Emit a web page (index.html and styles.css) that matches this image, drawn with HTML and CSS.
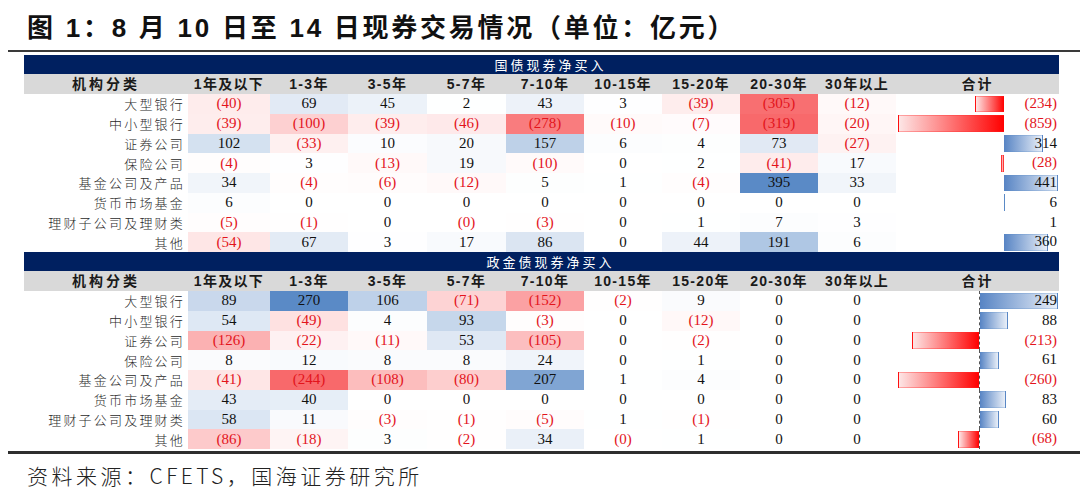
FILE: index.html
```html
<!DOCTYPE html>
<html lang="zh-CN">
<head>
<meta charset="utf-8">
<title>图1 现券交易情况</title>
<link rel="stylesheet" href="styles.css">
</head>
<body>
<div class="page">
  <h1 class="title">图 1：8 月 10 日至 14 日现券交易情况（单位：亿元）</h1>
  <div class="rule top"></div>
  <table class="grid">
    <colgroup>
      <col class="c-lb"><col class="c-1"><col class="c-2"><col class="c-3"><col class="c-3"><col class="c-4"><col class="c-4"><col class="c-4"><col class="c-4"><col class="c-4"><col class="c-tot">
    </colgroup>
    <tbody class="t1">
      <tr class="band"><th colspan="11">国债现券净买入</th></tr>
      <tr class="head"><th class="hl">机构分类</th><th>1年及以下</th><th>1-3年</th><th>3-5年</th><th>5-7年</th><th>7-10年</th><th>10-15年</th><th>15-20年</th><th>20-30年</th><th>30年以上</th><th class="ht">合计</th></tr>
      <tr class="row"><td class="lb">大型银行</td><td class="n" style="--t:.125">(40)</td><td class="p" style="--t:.175">69</td><td class="p" style="--t:.114">45</td><td class="p" style="--t:.005">2</td><td class="p" style="--t:.109">43</td><td class="p" style="--t:.008">3</td><td class="n" style="--t:.122">(39)</td><td class="n" style="--t:.956">(305)</td><td class="n" style="--t:.038">(12)</td><td class="tot"><div class="tin"><div class="bars"><span class="neg"><span class="bar" style="width:28.9px"></span></span><span class="pos"></span></div><span class="num neg-num">(234)</span></div></td></tr>
      <tr class="row"><td class="lb">中小型银行</td><td class="n" style="--t:.122">(39)</td><td class="n" style="--t:.313">(100)</td><td class="n" style="--t:.122">(39)</td><td class="n" style="--t:.144">(46)</td><td class="n" style="--t:.871">(278)</td><td class="n" style="--t:.031">(10)</td><td class="n" style="--t:.022">(7)</td><td class="n" style="--t:1">(319)</td><td class="n" style="--t:.063">(20)</td><td class="tot"><div class="tin"><div class="bars"><span class="neg"><span class="bar" style="width:106px"></span></span><span class="pos"></span></div><span class="num neg-num">(859)</span></div></td></tr>
      <tr class="row"><td class="lb">证券公司</td><td class="p" style="--t:.258">102</td><td class="n" style="--t:.103">(33)</td><td class="p" style="--t:.025">10</td><td class="p" style="--t:.051">20</td><td class="p" style="--t:.397">157</td><td class="p" style="--t:.015">6</td><td class="p" style="--t:.01">4</td><td class="p" style="--t:.185">73</td><td class="n" style="--t:.085">(27)</td><td class="tot"><div class="tin"><div class="bars"><span class="neg"></span><span class="pos"><span class="bar" style="width:38.7px"></span></span></div><span class="num">314</span></div></td></tr>
      <tr class="row"><td class="lb">保险公司</td><td class="n" style="--t:.013">(4)</td><td class="p" style="--t:.008">3</td><td class="n" style="--t:.041">(13)</td><td class="p" style="--t:.048">19</td><td class="n" style="--t:.031">(10)</td><td class="z">0</td><td class="p" style="--t:.005">2</td><td class="n" style="--t:.129">(41)</td><td class="p" style="--t:.043">17</td><td class="tot"><div class="tin"><div class="bars"><span class="neg"><span class="bar" style="width:3.5px"></span></span><span class="pos"></span></div><span class="num neg-num">(28)</span></div></td></tr>
      <tr class="row"><td class="lb">基金公司及产品</td><td class="p" style="--t:.086">34</td><td class="n" style="--t:.013">(4)</td><td class="n" style="--t:.019">(6)</td><td class="n" style="--t:.038">(12)</td><td class="p" style="--t:.013">5</td><td class="p" style="--t:.003">1</td><td class="n" style="--t:.013">(4)</td><td class="p" style="--t:1">395</td><td class="p" style="--t:.084">33</td><td class="tot"><div class="tin"><div class="bars"><span class="neg"></span><span class="pos"><span class="bar" style="width:54.4px"></span></span></div><span class="num">441</span></div></td></tr>
      <tr class="row"><td class="lb">货币市场基金</td><td class="p" style="--t:.015">6</td><td class="z">0</td><td class="z">0</td><td class="z">0</td><td class="z">0</td><td class="z">0</td><td class="z">0</td><td class="z">0</td><td class="z">0</td><td class="tot"><div class="tin"><div class="bars"><span class="neg"></span><span class="pos"><span class="bar thin" style="width:1px"></span></span></div><span class="num">6</span></div></td></tr>
      <tr class="row"><td class="lb">理财子公司及理财类</td><td class="n" style="--t:.016">(5)</td><td class="n" style="--t:.003">(1)</td><td class="z">0</td><td class="n">(0)</td><td class="n" style="--t:.009">(3)</td><td class="z">0</td><td class="p" style="--t:.003">1</td><td class="p" style="--t:.018">7</td><td class="p" style="--t:.008">3</td><td class="tot"><div class="tin"><div class="bars"><span class="neg"></span><span class="pos"></span></div><span class="num">1</span></div></td></tr>
      <tr class="row"><td class="lb">其他</td><td class="n" style="--t:.169">(54)</td><td class="p" style="--t:.17">67</td><td class="p" style="--t:.008">3</td><td class="p" style="--t:.043">17</td><td class="p" style="--t:.218">86</td><td class="z">0</td><td class="p" style="--t:.111">44</td><td class="p" style="--t:.484">191</td><td class="p" style="--t:.015">6</td><td class="tot"><div class="tin"><div class="bars"><span class="neg"></span><span class="pos"><span class="bar" style="width:44.4px"></span></span></div><span class="num">360</span></div></td></tr>
    </tbody>
    <tbody class="t2">
      <tr class="band"><th colspan="11">政金债现券净买入</th></tr>
      <tr class="head"><th class="hl">机构分类</th><th>1年及以下</th><th>1-3年</th><th>3-5年</th><th>5-7年</th><th>7-10年</th><th>10-15年</th><th>15-20年</th><th>20-30年</th><th>30年以上</th><th class="ht">合计</th></tr>
      <tr class="row"><td class="lb">大型银行</td><td class="p" style="--t:.33">89</td><td class="p" style="--t:1">270</td><td class="p" style="--t:.393">106</td><td class="n" style="--t:.291">(71)</td><td class="n" style="--t:.623">(152)</td><td class="n" style="--t:.008">(2)</td><td class="p" style="--t:.033">9</td><td class="z">0</td><td class="z">0</td><td class="tot"><div class="tin"><div class="bars"><span class="neg"></span><span class="pos"><span class="bar" style="width:78.4px"></span></span></div><span class="num">249</span></div></td></tr>
      <tr class="row"><td class="lb">中小型银行</td><td class="p" style="--t:.2">54</td><td class="n" style="--t:.201">(49)</td><td class="p" style="--t:.015">4</td><td class="p" style="--t:.344">93</td><td class="n" style="--t:.012">(3)</td><td class="z">0</td><td class="n" style="--t:.049">(12)</td><td class="z">0</td><td class="z">0</td><td class="tot"><div class="tin"><div class="bars"><span class="neg"></span><span class="pos"><span class="bar" style="width:27.7px"></span></span></div><span class="num">88</span></div></td></tr>
      <tr class="row"><td class="lb">证券公司</td><td class="n" style="--t:.516">(126)</td><td class="n" style="--t:.09">(22)</td><td class="n" style="--t:.045">(11)</td><td class="p" style="--t:.196">53</td><td class="n" style="--t:.43">(105)</td><td class="z">0</td><td class="n" style="--t:.008">(2)</td><td class="z">0</td><td class="z">0</td><td class="tot"><div class="tin"><div class="bars"><span class="neg"><span class="bar" style="width:67.1px"></span></span><span class="pos"></span></div><span class="num neg-num">(213)</span></div></td></tr>
      <tr class="row"><td class="lb">保险公司</td><td class="p" style="--t:.03">8</td><td class="p" style="--t:.044">12</td><td class="p" style="--t:.03">8</td><td class="p" style="--t:.03">8</td><td class="p" style="--t:.089">24</td><td class="z">0</td><td class="p" style="--t:.004">1</td><td class="z">0</td><td class="z">0</td><td class="tot"><div class="tin"><div class="bars"><span class="neg"></span><span class="pos"><span class="bar" style="width:19.2px"></span></span></div><span class="num">61</span></div></td></tr>
      <tr class="row"><td class="lb">基金公司及产品</td><td class="n" style="--t:.168">(41)</td><td class="n" style="--t:1">(244)</td><td class="n" style="--t:.443">(108)</td><td class="n" style="--t:.328">(80)</td><td class="p" style="--t:.767">207</td><td class="p" style="--t:.004">1</td><td class="p" style="--t:.015">4</td><td class="z">0</td><td class="z">0</td><td class="tot"><div class="tin"><div class="bars"><span class="neg"><span class="bar" style="width:81.9px"></span></span><span class="pos"></span></div><span class="num neg-num">(260)</span></div></td></tr>
      <tr class="row"><td class="lb">货币市场基金</td><td class="p" style="--t:.159">43</td><td class="p" style="--t:.148">40</td><td class="z">0</td><td class="z">0</td><td class="z">0</td><td class="z">0</td><td class="z">0</td><td class="z">0</td><td class="z">0</td><td class="tot"><div class="tin"><div class="bars"><span class="neg"></span><span class="pos"><span class="bar" style="width:26.1px"></span></span></div><span class="num">83</span></div></td></tr>
      <tr class="row"><td class="lb">理财子公司及理财类</td><td class="p" style="--t:.215">58</td><td class="p" style="--t:.041">11</td><td class="n" style="--t:.012">(3)</td><td class="n" style="--t:.004">(1)</td><td class="n" style="--t:.02">(5)</td><td class="p" style="--t:.004">1</td><td class="n" style="--t:.004">(1)</td><td class="z">0</td><td class="z">0</td><td class="tot"><div class="tin"><div class="bars"><span class="neg"></span><span class="pos"><span class="bar" style="width:18.9px"></span></span></div><span class="num">60</span></div></td></tr>
      <tr class="row"><td class="lb">其他</td><td class="n" style="--t:.352">(86)</td><td class="n" style="--t:.074">(18)</td><td class="p" style="--t:.011">3</td><td class="n" style="--t:.008">(2)</td><td class="p" style="--t:.126">34</td><td class="n">(0)</td><td class="p" style="--t:.004">1</td><td class="z">0</td><td class="z">0</td><td class="tot"><div class="tin"><div class="bars"><span class="neg"><span class="bar" style="width:21.4px"></span></span><span class="pos"></span></div><span class="num neg-num">(68)</span></div></td></tr>
    </tbody>
  </table>
  <div class="rule bottom"></div>
  <p class="source">资料来源：CFETS，国海证券研究所</p>
</div>
</body>
</html>
```

FILE: styles.css
```css
html, body {
  margin: 0;
  padding: 0;
  background: #ffffff;
}

body {
  font-family: "Liberation Sans", "Noto Sans CJK SC", sans-serif;
  color: #000;
}

.page {
  width: 1080px;
  height: 493px;
  overflow: hidden;
}

.title {
  margin: 0;
  padding: 12px 0 0 27px;
  height: 38px;
  font-family: "Liberation Sans", "Noto Sans CJK SC", sans-serif;
  font-weight: 700;
  font-size: 26px;
  line-height: 32px;
  letter-spacing: 2.75px;
  color: #111;
  white-space: nowrap;
}

.rule {
  margin-left: 8px;
  background: #3a3a3a;
}

.rule.top {
  height: 2px;
  margin-bottom: 3px;
}

.rule.bottom {
  height: 3px;
  margin-top: 2px;
  background: #2e2e2e;
}

.grid {
  margin-left: 24px;
  width: 1035px;
  table-layout: fixed;
  border-collapse: collapse;
  border-spacing: 0;
}

.c-lb { width: 164px; }
.c-1 { width: 82px; }
.c-2 { width: 78px; }
.c-3 { width: 79px; }
.c-4 { width: 78px; }
.c-tot { width: 163px; }

.grid th,
.grid td {
  padding: 0;
  white-space: nowrap;
  overflow: hidden;
}

.band th {
  height: 19px;
  background: #002060;
  color: #ffffff;
  font-family: "Noto Sans CJK SC", sans-serif;
  font-weight: 400;
  font-size: 13px;
  line-height: 19px;
  letter-spacing: 3px;
  text-align: center;
  padding-left: 18px;
}

.head th {
  height: 20px;
  background: #d9d9d9;
  color: #1a1a1a;
  font-family: "Liberation Sans", "Noto Sans CJK SC", sans-serif;
  font-weight: 700;
  font-size: 14px;
  line-height: 20px;
  letter-spacing: 1.3px;
  text-align: center;
}

.head th.hl {
  letter-spacing: 3px;
}

.head th.ht {
  letter-spacing: 2px;
}

.row td {
  --t: 0;
  height: 19.75px;
  line-height: 19px;
  text-align: center;
  font-family: "Liberation Serif", serif;
  font-size: 15px;
  color: #111;
}

.row td.lb {
  text-align: right;
  padding-right: 3px;
  font-family: "Noto Sans CJK SC", sans-serif;
  font-size: 13px;
  font-weight: 300;
  letter-spacing: 2.2px;
  color: #2a2a2a;
  background: #ffffff;
}

.row td.p {
  background-color: rgba(90, 138, 198, var(--t));
}

.row td.n {
  background-color: rgba(248, 105, 107, var(--t));
  color: #e3141c;
}

.row td.tot {
  padding: 0;
}

.tin {
  display: grid;
  height: 19.75px;
}

.bars,
.num {
  grid-area: 1 / 1;
}

.bars {
  display: flex;
  padding-left: 2px;
  height: 19.75px;
}

.neg {
  display: flex;
  justify-content: flex-end;
  box-sizing: border-box;
  padding: 1.5px 0;
  height: 100%;
}

.t1 .neg { width: 106px; }
.t2 .neg {
  width: 82px;
  border-right: 1px dashed #555;
}

.pos {
  flex: 1;
  display: flex;
  box-sizing: border-box;
  padding: 1.5px 0;
  height: 100%;
}

.bar {
  display: block;
  box-sizing: border-box;
  height: 100%;
}

.neg .bar {
  background: linear-gradient(to right, #fde6e6, #ff0000);
  border: 1px solid rgba(255, 40, 40, 0.35);
  border-right: none;
}

.pos .bar {
  background: linear-gradient(to right, #5784c4, #e9eff8);
  border: 1px solid rgba(90, 138, 198, 0.3);
  border-left: none;
}

.pos .bar.thin {
  background: #5a8ac6;
  border: none;
}

.num {
  text-align: right;
  padding-right: 2px;
  line-height: 19px;
  color: #111;
}

.num.neg-num {
  color: #e3141c;
}

.source {
  margin: 7px 0 0 0;
  padding-left: 27px;
  font-family: "Noto Sans CJK SC", sans-serif;
  font-weight: 300;
  font-size: 21px;
  line-height: 28px;
  letter-spacing: 3.5px;
  color: #222;
  white-space: nowrap;
}
```
